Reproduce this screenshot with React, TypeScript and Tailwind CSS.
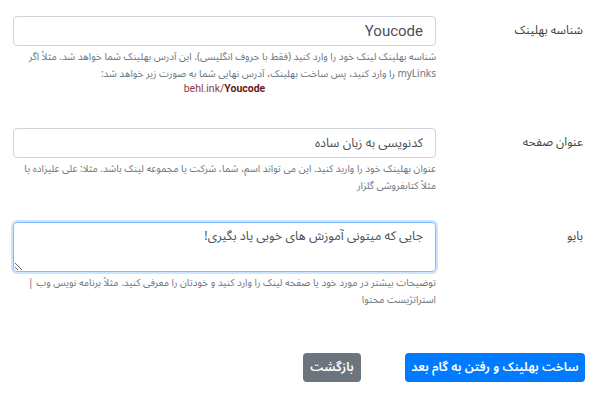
import React from 'react'

const fa = "font-['Noto_Sans_Arabic','DejaVu_Sans',sans-serif]"

const Field = ({ label, children, lines, extra }: { label: string; children: React.ReactNode; lines: string[]; extra?: React.ReactNode }) => (
    <div className="flex items-start">
        <div className="w-[164px] shrink-0 pr-[17px] h-[30px] leading-[30px] text-[12px] text-[#444]">{label}</div>
        <div className="w-[423px]">
            {children}
            <div className="mt-[2px] text-[10px] text-[#6c757d]">
                {lines.map((l) => (
                    <div key={l} className="h-[17px] leading-[17px] whitespace-nowrap">{l}</div>
                ))}
            </div>
            {extra}
        </div>
    </div>
)

export default function App() {
    return (
        <div dir="rtl" className={`${fa} w-[600px] h-[394px] overflow-hidden bg-white pt-[16px]`}>
            <Field
                label="شناسه بهلینک"
                lines={[
                    "شناسه بهلینک لینک خود را وارد کنید (فقط با حروف انگلیسی). این آدرس بهلینک شما خواهد شد. مثلاً اگر",
                    "myLinks را وارد کنید، پس ساخت بهلینک، آدرس نهایی شما به صورت زیر خواهد شد:",
                ]}
                extra={
                    <div dir="ltr" className="h-[14px] leading-[14px] text-center text-[10.5px] font-['Roboto',sans-serif] text-[#8a3a44]">
                        behl.ink/<span className="font-bold text-[#6e1616]">Youcode</span>
                    </div>
                }
            >
                <input
                    defaultValue="Youcode"
                    className="block w-full h-[30px] rounded border border-[#ced4da] px-3 text-[15px] text-[#495057] font-['Roboto',sans-serif] outline-none"
                />
            </Field>
            <div className="mt-[32px]">
                <Field
                    label="عنوان صفحه"
                    lines={[
                        "عنوان بهلینک خود را وارید کنید. این می تواند اسم، شما، شرکت یا مجموعه لینک باشد. مثلا: علی علیزاده یا",
                        "مثلاً کتابفروشی گلزار",
                    ]}
                >
                    <input
                        defaultValue="کدنویسی به زبان ساده"
                        className="block w-full h-[30px] rounded border border-[#ced4da] px-3 text-[12.5px] text-[#495057] outline-none"
                    />
                </Field>
            </div>
            <div className="mt-[28px]">
                <Field
                    label="بایو"
                    lines={[
                        "توضیحات بیشتر در مورد خود یا صفحه لینک را وارد کنید و خودتان را معرفی کنید. مثلاً برنامه نویس وب |",
                        "استراتژیست محتوا",
                    ]}
                >
                    <textarea
                        defaultValue="جایی که میتونی آموزش های خوبی یاد بگیری!"
                        className="block w-full h-[50px] rounded border border-[#80bdff] shadow-[0_0_0_2px_rgba(0,123,255,0.2)] px-3 py-[4px] text-[12.5px] text-[#495057] outline-none"
                    />
                </Field>
            </div>
            <div className="mt-[45px] flex items-center gap-[44px] pr-[15px]">
                <button className="h-[29px] w-[180px] rounded bg-[#007bff] text-white text-[12.5px] font-semibold whitespace-nowrap">
                    ساخت بهلینک و رفتن به گام بعد
                </button>
                <button className="h-[29px] w-[58px] rounded bg-[#6c757d] text-white text-[12.5px] font-semibold whitespace-nowrap">
                    بازگشت
                </button>
            </div>
        </div>
    )
}
